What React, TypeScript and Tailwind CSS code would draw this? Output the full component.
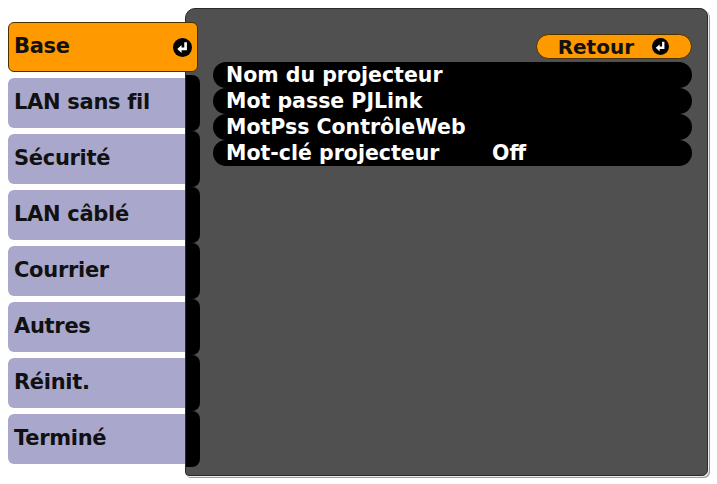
import React from "react";

const EnterIcon = ({ size = 16 }: { size?: number }) => (
  <svg width={size} height={size} viewBox="0 0 16 16">
    <circle cx="8" cy="8" r="8" fill="#000" />
    <path d="M10.6 3.6 V9.2 H6.2" stroke="#fff" strokeWidth="2.2" fill="none" />
    <path d="M7.2 5.8 L3.6 9.2 L7.2 12.6 Z" fill="#fff" />
  </svg>
);

const items = ["LAN sans fil", "Sécurité", "LAN câblé", "Courrier", "Autres", "Réinit.", "Terminé"];

const rows: [string, string][] = [
  ["Nom du projecteur", ""],
  ["Mot passe PJLink", ""],
  ["MotPss ContrôleWeb", ""],
  ["Mot-clé projecteur", "Off"],
];

export default function App() {
  return (
    <div className="w-[717px] h-[484px] bg-white font-['DejaVu_Sans',sans-serif] font-bold overflow-hidden">
      <div className="flex pt-[8px] pl-[8px]">
        <div className="relative z-10 flex w-[177px] flex-col gap-[6px] pt-[14px]">
          <div className="flex h-[50px] w-[190px] items-center justify-between rounded-[6px] border border-[#4a3000] bg-[#ff9900] pl-[5px] pr-[5px] text-[21px] text-[#111]">
            <span className="tracking-[-0.3px]">Base</span>
            <EnterIcon size={19} />
          </div>
          {items.map((t) => (
            <div
              key={t}
              className="flex h-[50px] w-[177px] items-center rounded-l-[6px] bg-[#a9a8cc] pl-[6px] text-[21px] tracking-[-0.3px] text-[#111]"
            >
              {t}
            </div>
          ))}
        </div>
        <div className="flex h-[468px] w-[523px] rounded-tl-[10px] rounded-tr-[8px] rounded-br-[6px] rounded-bl-[4px] border border-[#2a2a2a] bg-[#505050] shadow-[1px_1px_0_#eeeeee,2px_2px_0_#9a9a9a]">
          <div className="flex w-[14px] flex-col pt-[10px]">
            <div className="h-[56px]" />
            {items.map((t) => (
              <div key={t} className="h-[56px] rounded-r-[8px] bg-black" />
            ))}
          </div>
          <div className="flex flex-1 flex-col pl-[13px] pr-[15px] pt-[25px]">
            <div className="flex h-[25px] w-[156px] items-center justify-end gap-[18px] self-end rounded-full border border-[#4a3000] bg-[#ff9900] pr-[22px] text-[20px] text-[#111]">
              <span className="leading-none">Retour</span>
              <EnterIcon size={17} />
            </div>
            <div className="mt-[3px] flex flex-col">
              {rows.map(([a, b]) => (
                <div key={a} className="flex h-[26px] items-center rounded-full bg-black pl-[13px] text-[20.5px] text-white">
                  <span className="w-[266px] whitespace-nowrap leading-none">{a}</span>
                  <span className="leading-none">{b}</span>
                </div>
              ))}
            </div>
          </div>
        </div>
      </div>
    </div>
  );
}
